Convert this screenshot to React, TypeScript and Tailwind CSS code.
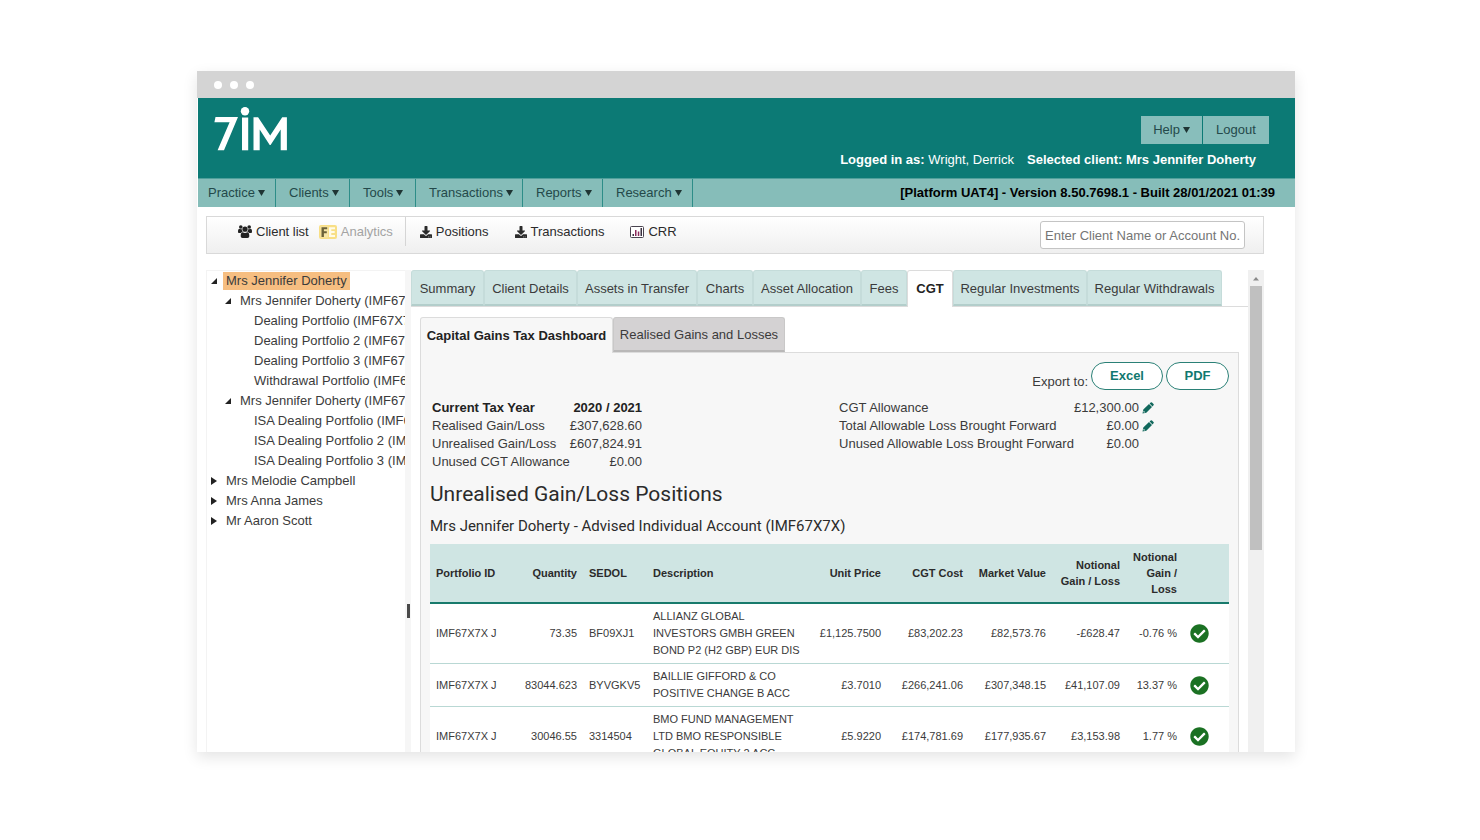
import type { ReactNode } from "react";
import { FaCheckCircle, FaDownload } from "react-icons/fa";

type Row = {
  id: string;
  quantity: string;
  sedol: string;
  description: string;
  price: string;
  cost: string;
  value: string;
  gain: string;
  percent: string;
};

const rows: Row[] = [
  { id: "IMF67X7X J", quantity: "73.35", sedol: "BF09XJ1", description: "ALLIANZ GLOBAL INVESTORS GMBH GREEN BOND P2 (H2 GBP) EUR DIS", price: "£1,125.7500", cost: "£83,202.23", value: "£82,573.76", gain: "-£628.47", percent: "-0.76 %" },
  { id: "IMF67X7X J", quantity: "83044.623", sedol: "BYVGKV5", description: "BAILLIE GIFFORD & CO POSITIVE CHANGE B ACC", price: "£3.7010", cost: "£266,241.06", value: "£307,348.15", gain: "£41,107.09", percent: "13.37 %" },
  { id: "IMF67X7X J", quantity: "30046.55", sedol: "3314504", description: "BMO FUND MANAGEMENT LTD BMO RESPONSIBLE GLOBAL EQUITY 2 ACC", price: "£5.9220", cost: "£174,781.69", value: "£177,935.67", gain: "£3,153.98", percent: "1.77 %" },
];

const menus = [
  { label: "Practice", width: "w-[78px] pl-[10px]" },
  { label: "Clients", width: "w-[74px] pl-[13px]" },
  { label: "Tools", width: "w-[66px] pl-[13px]" },
  { label: "Transactions", width: "w-[107px] pl-[13px]" },
  { label: "Reports", width: "w-[80px] pl-[13px]" },
  { label: "Research", width: "w-[90px] pl-[13px]" },
];

const tabs = [
  { label: "Summary", width: "w-[73px]" },
  { label: "Client Details", width: "w-[93px]" },
  { label: "Assets in Transfer", width: "w-[120px]" },
  { label: "Charts", width: "w-[56px]" },
  { label: "Asset Allocation", width: "w-[108px]" },
  { label: "Fees", width: "w-[46px]" },
  { label: "CGT", width: "w-[46px]", active: true },
  { label: "Regular Investments", width: "w-[134px]" },
  { label: "Regular Withdrawals", width: "w-[135px]" },
];

type Node = { label: string; level: 0 | 1 | 2; state?: "open" | "closed"; selected?: boolean };

const tree: Node[] = [
  { label: "Mrs Jennifer Doherty", level: 0, state: "open", selected: true },
  { label: "Mrs Jennifer Doherty (IMF67X7X)", level: 1, state: "open" },
  { label: "Dealing Portfolio (IMF67X7X J)", level: 2 },
  { label: "Dealing Portfolio 2 (IMF67X7X J)", level: 2 },
  { label: "Dealing Portfolio 3 (IMF67X7X J)", level: 2 },
  { label: "Withdrawal Portfolio (IMF67X7X J)", level: 2 },
  { label: "Mrs Jennifer Doherty (IMF67X7X)", level: 1, state: "open" },
  { label: "ISA Dealing Portfolio (IMF67X7X J)", level: 2 },
  { label: "ISA Dealing Portfolio 2 (IMF67X7X J)", level: 2 },
  { label: "ISA Dealing Portfolio 3 (IMF67X7X J)", level: 2 },
  { label: "Mrs Melodie Campbell", level: 0, state: "closed" },
  { label: "Mrs Anna James", level: 0, state: "closed" },
  { label: "Mr Aaron Scott", level: 0, state: "closed" },
];

const indent = ["pl-1", "pl-[18px]", "pl-8"];

function Caret() {
  return (
    <svg viewBox="0 0 7 6" className="h-[6px] w-[7px] shrink-0" aria-hidden="true">
      <path d="M0 0h7L3.5 6z" fill="#1f3534" />
    </svg>
  );
}

function Logo() {
  return (
    <svg viewBox="0 0 74 46" className="h-[46px] w-[74px]" role="img" aria-label="7iM">
      <g fill="#fff">
        <path d="M1.500 10H24L10 43.300H3.600L15.600 15.300H.4z" />
        <circle cx="31" cy="4.200" r="4.200" />
        <path d="M28 10.500h6.200v32.800H28z" />
        <path d="M39.500 43.300V10.200h4.600L56.200 28.600 68.200 10.200h4.700v33.100h-6.200V22.600L56.600 38h-.9L45.700 22.600v20.700z" />
      </g>
    </svg>
  );
}

function UsersIcon() {
  return (
    <svg viewBox="0 0 14 13" className="h-[13px] w-[14px] shrink-0" aria-hidden="true" fill="#222">
      <circle cx="2.800" cy="2" r="1.800" />
      <circle cx="11.200" cy="2" r="1.800" />
      <circle cx="7" cy="4.200" r="2.600" />
      <path d="M0 6.500C0 4.600.5 3.800 1.500 3.800c.8.500 1.700.5 2.300.2 0 1.300.3 2.200 1 2.900-1 0-1.700.5-2.100 1.100H1.200C.4 8 0 7.500 0 6.500zM14 6.500c0-1.900-.5-2.700-1.500-2.700-.8.500-1.700.5-2.300.2 0 1.300-.3 2.200-1 2.900 1 0 1.700.5 2.100 1.100h1.500c.8 0 1.200-.5 1.200-1.500z" />
      <path d="M2.700 11c0-2.500.6-3.700 2-3.700 1.400.9 3.200.9 4.600 0 1.400 0 2 1.200 2 3.700 0 1.200-.7 1.900-1.800 1.900h-5c-1.100 0-1.800-.7-1.800-1.900z" />
    </svg>
  );
}

function ChartIcon() {
  return (
    <svg viewBox="0 0 14 12" className="h-3 w-[14px] shrink-0" aria-hidden="true">
      <rect x=".5" y=".5" width="13" height="11" rx="1" fill="#fff" stroke="#4a4450" />
      <path d="M2.500 8h1.500v2H2.500zM10.500 2H12v8h-1.500z" fill="#3a3040" />
      <path d="M5 4h1.500v6H5zM7.800 5.500h1.500V10H7.800z" fill="#8c2a5c" />
    </svg>
  );
}

function FeIcon() {
  return (
    <svg viewBox="0 0 18 14" className="h-[14px] w-[18px] shrink-0" aria-hidden="true">
      <rect width="18" height="14" rx="2" fill="#f8df86" />
      <rect x="1.500" y="1.500" width="7.500" height="11" fill="#f7e6a6" />
      <path d="M2.500 2.200h5.700v2H4.900v2h2.900v2H4.900v3.800H2.500z" fill="#6c6238" />
      <path d="M10 2.200h6v2h-3.700v1.900h3.400v1.800h-3.400v2.100H16v2h-6z" fill="#fffbe8" />
    </svg>
  );
}

function PencilIcon() {
  return (
    <svg viewBox="0 0 12 12" className="size-3" aria-hidden="true">
      <path d="M.5 11.500l.8-3.900 5.700-5.600 3 3-5.700 5.700zM7.600 1.500L8.700.5q.7-.6 1.300 0l1.500 1.500q.6.700 0 1.300l-1 1.100z" fill="#11685c" />
      <path d="M1.700 8.800l1.500 1.500-1.200.3-.6-.6z" fill="#f7f7f7" />
    </svg>
  );
}

function Tool({ icon, label, muted }: { icon: ReactNode; label: string; muted?: boolean }) {
  return (
    <button className={muted ? "flex items-center gap-1 text-[#a3a3a3]" : "flex items-center gap-1 text-[#2b2b2b]"}>
      {icon}
      {label}
    </button>
  );
}

function Header() {
  return (
    <header>
      <div className="flex h-[80px] justify-between bg-[#0c7a75]">
        <a href="#home" className="pt-[9px] pl-4">
          <Logo />
        </a>
        <div className="flex flex-col items-end pt-[18px] text-white">
          <div className="mr-[26px] flex h-7 text-[#24494a]">
            <button className="flex w-[62px] items-center justify-center gap-[3px] border-r border-[#0c7a75] bg-[#88bebb]">
              Help <Caret />
            </button>
            <button className="w-[66px] bg-[#88bebb]">Logout</button>
          </div>
          <p className="mt-2 mr-[39px] flex gap-[13px] leading-4">
            <span>
              <b>Logged in as:</b> Wright, Derrick
            </span>
            <b>Selected client: Mrs Jennifer Doherty</b>
          </p>
        </div>
      </div>
      <div className="flex h-[29px] items-center justify-between border-t border-[#4f9f9b] bg-[#86bdb9]">
        <nav className="flex h-full">
          {menus.map((m) => (
            <button key={m.label} className={`flex items-center gap-[3px] border-r border-[#2d8d88] text-[#24494a] ${m.width}`}>
              {m.label} <Caret />
            </button>
          ))}
        </nav>
        <b className="mr-5 text-black">[Platform UAT4] - Version 8.50.7698.1 - Built 28/01/2021 01:39</b>
      </div>
    </header>
  );
}

function Toolbar() {
  return (
    <div className="mr-[31px] ml-2 mt-[9px] flex h-[38px] justify-between border border-[#d9d9d9] bg-linear-to-b from-white to-[#efefef]">
      <div className="flex h-[29px] items-center">
        <div className="flex h-full items-center gap-[10px] border-r border-[#d5d5d5] pr-[12px] pl-[31px]">
          <Tool icon={<UsersIcon />} label="Client list" />
          <Tool icon={<FeIcon />} label="Analytics" muted />
        </div>
        <div className="flex items-center gap-[26px] pl-[14px]">
          <Tool icon={<FaDownload className="size-3" />} label="Positions" />
          <Tool icon={<FaDownload className="size-3" />} label="Transactions" />
          <Tool icon={<ChartIcon />} label="CRR" />
        </div>
      </div>
      <input
        aria-label="Client name or account number"
        placeholder="Enter Client Name or Account No."
        className="mt-1 mr-[18px] h-7 w-[205px] rounded-[3px] border border-[#c4c4c4] bg-white px-1 placeholder:text-[#757575]"
      />
    </div>
  );
}

function Tree() {
  return (
    <ul className="w-[199px] shrink-0 overflow-hidden border-t border-l border-[#f3f3f3]">
      {tree.map((n, i) => (
        <li key={i} className={`flex h-5 items-center whitespace-nowrap ${indent[n.level]}`}>
          <span className="w-3 shrink-0">
            {n.state === "open" && (
              <svg viewBox="0 0 6 6" className="size-[6px]" aria-hidden="true">
                <path d="M6 0v6H0z" fill="#222" />
              </svg>
            )}
            {n.state === "closed" && (
              <svg viewBox="0 0 6 8" className="h-2 w-[6px]" aria-hidden="true">
                <path d="M0 0v8l6-4z" fill="#222" />
              </svg>
            )}
          </span>
          <a href="#client" className={n.selected ? "bg-[#f6be81] px-[3px] leading-[18px]" : "px-[3px] leading-[18px]"}>
            {n.label}
          </a>
        </li>
      ))}
    </ul>
  );
}

function Figures() {
  return (
    <div className="mt-[9px] flex justify-between pr-[75px] pl-[2px] leading-[18px] whitespace-nowrap">
      <table className="w-[208px]">
        <tbody>
          <tr className="text-[#222]">
            <th className="text-left">Current Tax Year</th>
            <th className="text-right">2020 / 2021</th>
          </tr>
          <tr><td>Realised Gain/Loss</td><td className="text-right">£307,628.60</td></tr>
          <tr><td>Unrealised Gain/Loss</td><td className="text-right">£607,824.91</td></tr>
          <tr><td>Unused CGT Allowance</td><td className="text-right">£0.00</td></tr>
        </tbody>
      </table>
      <table className="w-[312px] self-start">
        <tbody>
          <tr>
            <td>CGT Allowance</td>
            <td className="text-right">£12,300.00</td>
            <td className="pl-[3px]"><button aria-label="Edit CGT allowance" className="block"><PencilIcon /></button></td>
          </tr>
          <tr>
            <td>Total Allowable Loss Brought Forward</td>
            <td className="text-right">£0.00</td>
            <td className="pl-[3px]"><button aria-label="Edit loss brought forward" className="block"><PencilIcon /></button></td>
          </tr>
          <tr>
            <td>Unused Allowable Loss Brought Forward</td>
            <td className="text-right">£0.00</td>
            <td />
          </tr>
        </tbody>
      </table>
    </div>
  );
}

function Positions() {
  return (
    <table className="mt-2 w-full table-fixed bg-white text-[11px]">
      <colgroup>
        <col className="w-[75px]" />
        <col className="w-[78px]" />
        <col className="w-[64px]" />
        <col />
        <col className="w-[81px]" />
        <col className="w-[82px]" />
        <col className="w-[83px]" />
        <col className="w-[74px]" />
        <col className="w-[57px]" />
        <col className="w-[46px]" />
      </colgroup>
      <thead className="border-b-2 border-[#187a6c] bg-[#cfe5e3] leading-4 text-[#2b2b2b]">
        <tr>
          <th className="px-[6px] text-left">Portfolio ID</th>
          <th className="px-[6px] text-right">Quantity</th>
          <th className="px-[6px] text-left">SEDOL</th>
          <th className="px-[6px] text-left">Description</th>
          <th className="px-[6px] text-right">Unit Price</th>
          <th className="px-[6px] text-right">CGT Cost</th>
          <th className="px-[6px] text-right">Market Value</th>
          <th className="px-[6px] text-right">Notional Gain / Loss</th>
          <th className="px-[6px] py-[5px] text-right">Notional Gain / Loss</th>
          <th aria-label="Status" />
        </tr>
      </thead>
      <tbody className="leading-[17px]">
        {rows.map((r) => (
          <tr key={r.sedol} className="border-b border-[#b9d8d4]">
            <td className="px-[6px] py-1">{r.id}</td>
            <td className="px-[6px] text-right">{r.quantity}</td>
            <td className="pl-[6px]">{r.sedol}</td>
            <td className="px-[6px] py-1">{r.description}</td>
            <td className="px-[6px] text-right">{r.price}</td>
            <td className="px-[6px] text-right">{r.cost}</td>
            <td className="px-[6px] text-right">{r.value}</td>
            <td className="px-[6px] text-right">{r.gain}</td>
            <td className="px-[6px] text-right">{r.percent}</td>
            <td className="pl-[7px]"><FaCheckCircle className="size-[19px] text-[#1b7123]" /></td>
          </tr>
        ))}
      </tbody>
    </table>
  );
}

export default function App() {
  return (
    <div className="flex h-screen flex-col bg-white pt-[71px] pr-[185px] pb-[88px] pl-[197px] font-['Liberation_Sans',Arial,sans-serif] text-[13px] text-[#3b3b3b]">
      <div className="flex min-h-0 flex-1 flex-col overflow-hidden bg-white shadow-[0_5px_14px_rgba(0,0,0,0.11)]">
        <div className="flex h-[27px] shrink-0 items-center gap-2 bg-[#d4d4d4] pl-[17px]">
          <span className="size-2 rounded-full bg-white" />
          <span className="size-2 rounded-full bg-white" />
          <span className="size-2 rounded-full bg-white" />
        </div>
        <div className="flex min-h-0 flex-1 flex-col pl-px">
          <Header />
          <Toolbar />
          <div className="mr-[31px] ml-2 mt-4 flex min-h-0 flex-1">
            <Tree />
            <div className="flex w-[6px] shrink-0 items-center justify-center bg-[#f6f6f6] pt-[200px]">
              <span className="h-[14px] w-[3px] bg-[#4a4a4a]" />
            </div>
            <main className="min-w-0 flex-1 overflow-hidden">
              <div role="tablist" className="flex h-[37px] border-b border-[#dcdcdc]">
                {tabs.map((t) => (
                  <button
                    key={t.label}
                    role="tab"
                    aria-selected={!!t.active}
                    className={
                      t.active
                        ? `h-[37px] shrink-0 whitespace-nowrap rounded-t-[3px] border border-b-0 border-[#dcdcdc] bg-white font-bold text-[#222] ${t.width}`
                        : `h-9 shrink-0 whitespace-nowrap rounded-t-[3px] border border-b-2 border-[#c5dcda] border-b-[#b3cecb] bg-[#cfe5e3] pt-[2px] ${t.width}`
                    }
                  >
                    {t.label}
                  </button>
                ))}
              </div>
              <div className="pt-[10px] pr-[9px] pl-[9px]">
                <div role="tablist" className="flex">
                  <button role="tab" aria-selected="true" className="z-10 -mb-px h-9 w-[193px] rounded-t-[3px] border border-b-0 border-[#dcdcdc] bg-[#f7f7f7] font-bold text-[#222]">
                    Capital Gains Tax Dashboard
                  </button>
                  <button role="tab" aria-selected="false" className="h-[35px] w-[172px] rounded-t-[3px] border border-b-2 border-[#c9c8c8] border-b-[#b9b8b8] bg-[#d4d2d3] pt-[2px]">
                    Realised Gains and Losses
                  </button>
                </div>
                <section className="border border-[#dcdcdc] bg-[#f7f7f7] px-[9px] pt-[9px]">
                  <div className="flex items-end justify-end gap-[3px]">
                    <span className="leading-4">Export to:</span>
                    <button className="h-7 w-[72px] rounded-full border border-[#2a8076] bg-white font-bold text-[#11786f]">Excel</button>
                    <button className="h-7 w-[63px] rounded-full border border-[#2a8076] bg-white font-bold text-[#11786f]">PDF</button>
                  </div>
                  <Figures />
                  <h1 className="mt-[9px] font-[Roboto,sans-serif] text-[21px] leading-[28px] text-[#2b2b2b]">Unrealised Gain/Loss Positions</h1>
                  <h2 className="mt-2 font-[Roboto,sans-serif] text-[15px] leading-[20px] text-[#2b2b2b]">Mrs Jennifer Doherty - Advised Individual Account (IMF67X7X)</h2>
                  <Positions />
                </section>
              </div>
            </main>
            <div className="flex w-4 shrink-0 flex-col items-center bg-[#f0f0f0]" aria-hidden="true">
              <svg viewBox="0 0 16 16" className="size-4">
                <path d="M5 10.500L8 7l3 3.500z" fill="#8a8a8a" />
              </svg>
              <div className="h-[264px] w-3 bg-[#c0c0c0]" />
            </div>
          </div>
        </div>
      </div>
    </div>
  );
}
